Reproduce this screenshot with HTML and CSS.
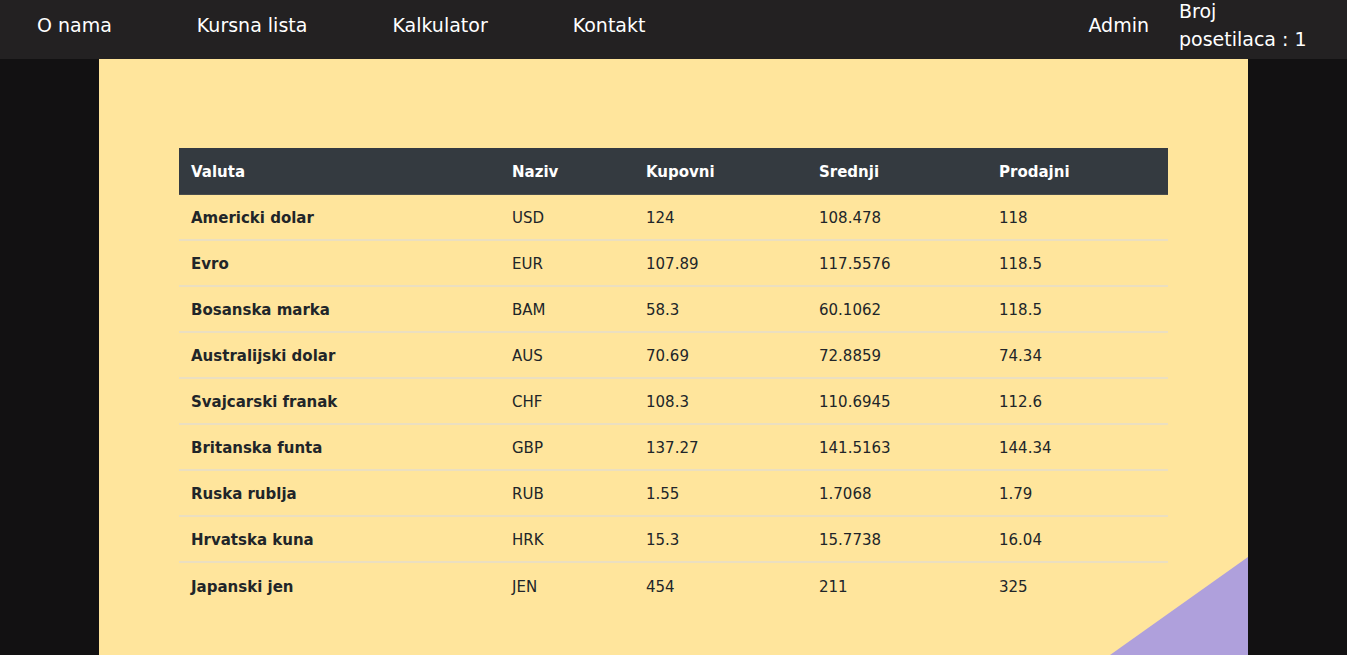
FILE: index.html
```html
<!DOCTYPE html>
<html lang="sr">
<head>
<meta charset="utf-8">
<title>Kursna lista</title>
<link rel="stylesheet" href="styles.css">
</head>
<body>
<nav class="topnav">
  <ul class="menu">
    <li><a href="#">O nama</a></li>
    <li><a href="#">Kursna lista</a></li>
    <li><a href="#">Kalkulator</a></li>
    <li><a href="#">Kontakt</a></li>
  </ul>
  <div class="right">
    <a href="#" class="admin">Admin</a>
    <span class="counter">Broj posetilaca : 1</span>
  </div>
</nav>
<main class="page">
  <table class="rates">
    <colgroup>
      <col class="c1"><col class="c2"><col class="c3"><col class="c4"><col class="c5">
    </colgroup>
    <thead>
      <tr><th>Valuta</th><th>Naziv</th><th>Kupovni</th><th>Srednji</th><th>Prodajni</th></tr>
    </thead>
    <tbody>
      <tr><th>Americki dolar</th><td>USD</td><td>124</td><td>108.478</td><td>118</td></tr>
      <tr><th>Evro</th><td>EUR</td><td>107.89</td><td>117.5576</td><td>118.5</td></tr>
      <tr><th>Bosanska marka</th><td>BAM</td><td>58.3</td><td>60.1062</td><td>118.5</td></tr>
      <tr><th>Australijski dolar</th><td>AUS</td><td>70.69</td><td>72.8859</td><td>74.34</td></tr>
      <tr><th>Svajcarski franak</th><td>CHF</td><td>108.3</td><td>110.6945</td><td>112.6</td></tr>
      <tr><th>Britanska funta</th><td>GBP</td><td>137.27</td><td>141.5163</td><td>144.34</td></tr>
      <tr><th>Ruska rublja</th><td>RUB</td><td>1.55</td><td>1.7068</td><td>1.79</td></tr>
      <tr><th>Hrvatska kuna</th><td>HRK</td><td>15.3</td><td>15.7738</td><td>16.04</td></tr>
      <tr><th>Japanski jen</th><td>JEN</td><td>454</td><td>211</td><td>325</td></tr>
    </tbody>
  </table>
  <div class="corner"></div>
</main>
</body>
</html>
```

FILE: styles.css
```css
* { box-sizing: border-box; }
html, body { margin: 0; padding: 0; }
body {
  background: #121112;
  font-family: "DejaVu Sans", Verdana, sans-serif;
  height: 655px;
  overflow: hidden;
}
.topnav {
  height: 59px;
  background: #232122;
  display: flex;
  justify-content: space-between;
  align-items: center;
  padding-bottom: 9px;
  color: #fff;
  font-size: 19px;
}
.menu {
  list-style: none;
  margin: 0;
  padding: 0 0 0 37px;
  display: flex;
  gap: 85px;
}
.menu a, .admin {
  color: #fff;
  text-decoration: none;
}
.right {
  display: flex;
  align-items: center;
  padding-right: 38px;
}
.admin { margin-right: 30px; }
.counter {
  width: 130px;
  line-height: 28px;
}
.page {
  position: relative;
  width: 1149px;
  margin: 0 0 0 99px;
  height: 596px;
  background: #ffe59c;
  padding: 89px 80px 0 80px;
  overflow: hidden;
}
.rates {
  width: 989px;
  border-collapse: collapse;
  font-size: 15px;
  color: #212529;
}
.c1 { width: 321px; }
.c2 { width: 134px; }
.c3 { width: 173px; }
.c4 { width: 180px; }
.c5 { width: 181px; }
.rates th, .rates td {
  text-align: left;
  padding: 2px 12px 0;
  height: 46px;
  vertical-align: middle;
}
.rates thead th {
  background: #343a40;
  color: #fff;
  border-bottom: 1px solid #4a4d4c;
}
.rates tbody tr + tr th, .rates tbody tr + tr td {
  border-top: 2px solid #ebdfc0;
}
.rates td { font-weight: normal; }
.corner {
  position: absolute;
  right: 0;
  bottom: 0;
  width: 138px;
  height: 98px;
  background: #afa0dc;
  clip-path: polygon(100% 0, 100% 100%, 0 100%);
}
```
